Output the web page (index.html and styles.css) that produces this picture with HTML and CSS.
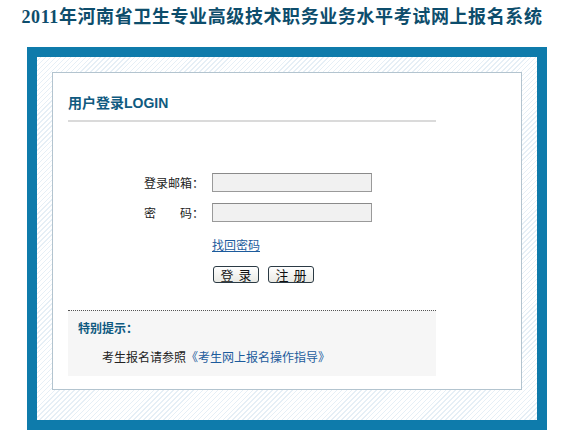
FILE: index.html
```html
<!DOCTYPE html>
<html lang="zh-CN">
<head>
<meta charset="utf-8">
<title>2011年河南省卫生专业高级技术职务业务水平考试网上报名系统</title>
<link rel="stylesheet" href="styles.css">
</head>
<body>
<h1 class="site-title">2011年河南省卫生专业高级技术职务业务水平考试网上报名系统</h1>
<div class="frame">
  <div class="panel">
    <h2 class="panel-title">用户登录LOGIN</h2>
    <form class="login-form">
      <div class="row">
        <label class="label">登录邮箱：</label>
        <input class="field" type="text">
      </div>
      <div class="row">
        <label class="label label-spaced"><span>密</span><span>码：</span></label>
        <input class="field" type="password">
      </div>
      <div class="row row-link">
        <a class="forgot" href="#">找回密码</a>
      </div>
      <div class="row row-buttons">
        <button class="btn" type="button">登 录</button>
        <button class="btn" type="button">注 册</button>
      </div>
    </form>
    <div class="notice">
      <div class="notice-title">特别提示：</div>
      <p class="notice-text">考生报名请参照<a class="guide" href="#">《考生网上报名操作指导》</a></p>
    </div>
  </div>
</div>
</body>
</html>
```

FILE: styles.css
```css
html, body {
  margin: 0;
  padding: 0;
  background: #ffffff;
}
body {
  font-family: "Noto Sans CJK SC", "DejaVu Sans", sans-serif;
  font-size: 12px;
  color: #222;
  width: 564px;
  height: 435px;
  overflow: hidden;
}
.site-title {
  margin: 0;
  padding-top: 6px;
  height: 24px;
  line-height: 22px;
  text-align: center;
  font-family: "Liberation Serif", "Noto Sans CJK SC", serif;
  font-size: 18px;
  font-weight: bold;
  color: #0d4d6c;
  letter-spacing: 0.6px;
}
.frame {
  margin-top: 17px;
  margin-left: 27px;
  width: 470px;
  height: 318px;
  border: 10px solid #0e7bab;
  padding: 15px 15px 30px 15px;
  background: repeating-linear-gradient(135deg, #ffffff 0px, #ffffff 2.5px, #e6eff6 2.5px, #e6eff6 3.5px);
  box-sizing: content-box;
  display: flex;
}
.panel {
  flex: 1;
  background: #ffffff;
  border: 1px solid #b3c4cf;
  padding: 20px 15px 0 15px;
  display: flex;
  flex-direction: column;
  align-items: flex-start;
}
.panel-title {
  margin: 0;
  width: 368px;
  height: 29px;
  line-height: 20px;
  font-family: "Liberation Sans", "Noto Sans CJK SC", sans-serif;
  font-size: 14px;
  font-weight: bold;
  color: #0f5a80;
  border-bottom: 2px solid #dadada;
  box-sizing: border-box;
}
.login-form {
  margin: 51px 0 0 76px;
  display: flex;
  flex-direction: column;
}
.row {
  display: flex;
  align-items: center;
  height: 19px;
  margin-bottom: 11px;
}
.label {
  width: 60px;
  margin-right: 8px;
  font-size: 12px;
  line-height: 19px;
  color: #222;
  white-space: nowrap;
}
.label-spaced {
  display: flex;
  justify-content: space-between;
}
.field {
  width: 160px;
  height: 19px;
  box-sizing: border-box;
  margin: 0;
  padding: 0 3px;
  border: 1px solid #9a9a9a;
  border-top-color: #8a8a8a;
  background: #f1f1f1;
  font-size: 12px;
}
.row-link {
  margin-left: 68px;
  margin-top: 2px;
  margin-bottom: 12px;
}
.forgot {
  color: #1c5b9c;
  text-decoration: underline;
  font-size: 12px;
  line-height: 14px;
}
.row-buttons {
  margin-left: 69px;
  height: 17px;
  gap: 9px;
  margin-bottom: 0;
}
.btn {
  height: 17px;
  width: 46px;
  padding: 0;
  margin: 0;
  border: 1px solid #2b3a44;
  border-radius: 3px;
  background: linear-gradient(#ffffff, #e9e9e4);
  font-family: "Noto Sans CJK SC", sans-serif;
  font-size: 13px;
  line-height: 15px;
  color: #111;
  word-spacing: 2px;
  cursor: pointer;
}
.notice {
  margin-top: 27px;
  width: 368px;
  height: 66px;
  box-sizing: border-box;
  background: #f6f6f6;
  border-top: 1px dotted #555;
  padding: 9px 0 0 10px;
}
.notice-title {
  font-size: 12px;
  font-weight: bold;
  color: #0f5a80;
  line-height: 16px;
}
.notice-text {
  margin: 13px 0 0 24px;
  font-size: 12px;
  line-height: 16px;
  color: #222;
}
.guide {
  color: #1c5b9c;
  text-decoration: none;
}
```
